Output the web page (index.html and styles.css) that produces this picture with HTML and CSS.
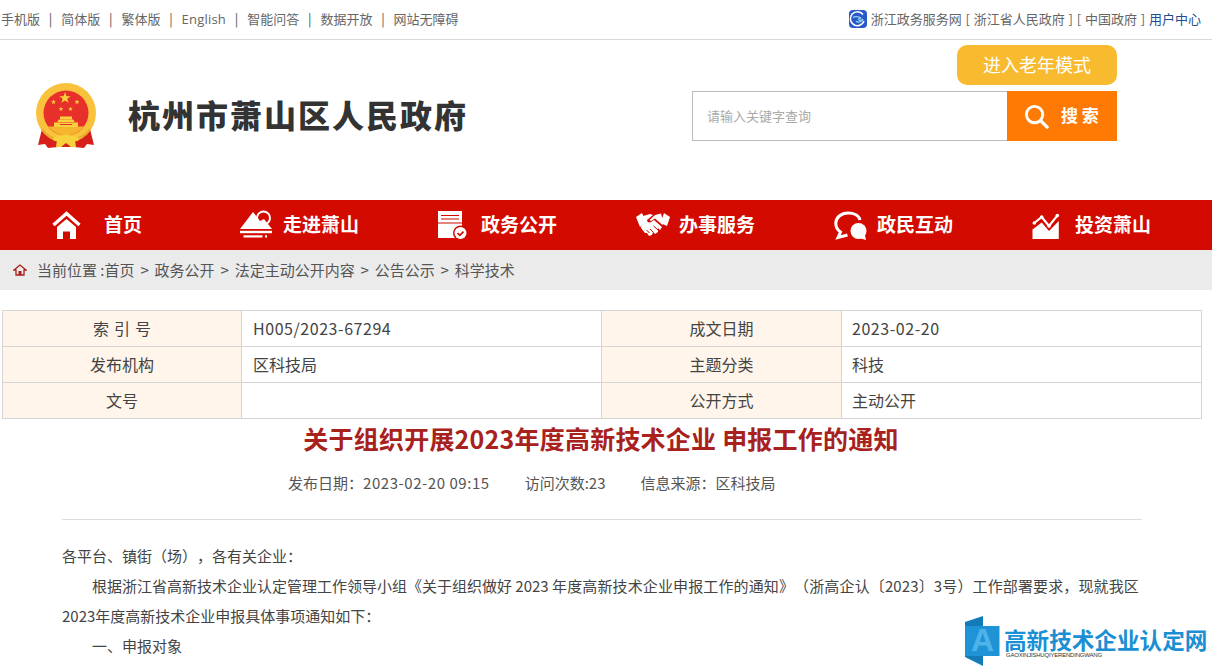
FILE: index.html
```html
<!DOCTYPE html>
<html lang="zh-CN">
<head>
<meta charset="utf-8">
<title>关于组织开展2023年度高新技术企业 申报工作的通知</title>
<link rel="stylesheet" href="styles.css">
</head>
<body>
<div class="top">
  <div class="top-left">
    <a>手机版</a><i>|</i><a>简体版</a><i>|</i><a>繁体版</a><i>|</i><a class="en">English</a><i>|</i><a>智能问答</a><i>|</i><a>数据开放</a><i>|</i><a>网站无障碍</a>
  </div>
  <div class="top-right">
    <svg class="zw" viewBox="0 0 18 18"><rect width="18" height="18" rx="4" fill="#2a58c8"/><path d="M14 4.500A7 7 0 1 0 15 11" fill="none" stroke="#fff" stroke-width="1.600"/><path d="M4 7.500c3-2 6-.5 8 .5-2 0-3 1-2 2 1.500 1 3 0 4-1-1 3-5 4-7 2" fill="none" stroke="#8fd0f5" stroke-width="1.300"/></svg>
    <span>浙江政务服务网 [ 浙江省人民政府 ] [ 中国政府 ] <b class="user">用户中心</b></span>
  </div>
</div>

<header class="header">
  <div class="brand">
    <svg class="emblem" viewBox="0 0 62 68">
      <defs><polygon id="st" points="0,-1 .24,-.31 .95,-.31 .38,.12 .59,.81 0,.4 -.59,.81 -.38,.12 -.95,-.31 -.24,-.31"/></defs>
      <path d="M7 46 3 62l7-1 3 4 10-1h16l10 1 3-4 7 1-4-16Z" fill="#d6201a"/>
      <circle cx="31" cy="30" r="30" fill="#f8c23c"/>
      <circle cx="31" cy="30" r="22.500" fill="#e8302a"/>
      <path d="M13 43.500h36a22.500 22.500 0 0 1-36 0Z" fill="#f6b52e"/>
      <path d="M7 46c5 8 14 11 24 11s19-3 24-11" fill="none" stroke="#e9a92a" stroke-width="1.500"/>
      <g fill="#f9d13c">
        <use href="#st" transform="translate(30 15) scale(6)"/>
        <use href="#st" transform="translate(18.500 19) scale(2.800)"/>
        <use href="#st" transform="translate(42 19) scale(2.800)"/>
        <use href="#st" transform="translate(26 26) scale(2.500)"/>
        <use href="#st" transform="translate(35.500 26) scale(2.500)"/>
        <path d="M24 36.500h14l2 2.500H22Z"/><rect x="25" y="33.500" width="12" height="3"/><rect x="19" y="39.500" width="24" height="4.500"/>
        <path d="M18 55c5-3 9-1 13-4 4 3 8 1 13 4l-1 3-3-1 1 7h-5l-5-4-5 4h-5l1-7-3 1Z"/>
      </g>
      <path d="M25 41.500h12" stroke="#e8302a" stroke-width="1"/>
    </svg>
    <h1 class="site">杭州市萧山区人民政府</h1>
  </div>
  <div class="tools">
    <a class="elder"><span>进入老年模式</span></a>
    <div class="search">
      <div class="field"><span>请输入关键字查询</span></div>
      <div class="go">
        <svg class="mag" viewBox="0 0 26 26"><circle cx="11" cy="11" r="8.500" fill="none" stroke="#fff" stroke-width="3"/><path d="M17.500 17.500 24 24" stroke="#fff" stroke-width="3.500" stroke-linecap="round"/></svg>
        <span>搜 索</span>
      </div>
    </div>
  </div>
</header>

<nav class="nav">
  <a class="item home">
    <svg viewBox="0 0 34 30"><path d="M1.500 15 14.500 3.500 27.500 15" fill="none" stroke="#fff" stroke-width="3.400"/><path d="M5 17 14.500 9 24 17V29H18V21.500H11V29H5Z" fill="#fff"/></svg>
    <span>首页</span>
  </a>
  <a class="item">
    <svg viewBox="0 0 34 30"><circle cx="23.500" cy="8" r="6.500" fill="#d20a00" stroke="#fff" stroke-width="2"/><path d="M0 19 13 2 20 11 24 9 32 19Z" fill="#fff"/><rect y="20.800" width="32" height="2.400" fill="#fff"/><rect x="3.500" y="25.300" width="19" height="2.200" fill="#fff"/><rect x="25" y="25.300" width="2" height="2.200" fill="#fff"/></svg>
    <span>走进萧山</span>
  </a>
  <a class="item">
    <svg viewBox="0 0 34 30"><rect y="1" width="24" height="27" fill="#fff"/><path d="M3 5.500h18M3 9h18M0 13h24" stroke="#d20a00" stroke-width="1.200" fill="none"/><circle cx="22.500" cy="23" r="7.500" fill="#d20a00"/><circle cx="22.500" cy="23" r="6" fill="#fff"/><path d="m19.500 23 2.300 2.300 3.700-3.700" fill="none" stroke="#d20a00" stroke-width="1.700"/></svg>
    <span>政务公开</span>
  </a>
  <a class="item">
    <svg viewBox="0 0 34 30"><path d="M0 7 6 3 10.500 13 4 17Z" fill="#fff"/><path d="M34 7 28 3 24.500 13 31 16Z" fill="#fff"/><path d="M7 6 14 4 17 5 11 10C11 12 13 13 15 12L18 10 26 17 24 20 22 18 22 22 19 24 17 22 16 25 13 26 11 23 9 23 5 18Z" fill="#fff"/><path d="M19 5 25 3.500 27.500 13 26.500 15 19 8.500 15 11 13.500 10Z" fill="#fff"/><path d="m17.500 16 4.500 4M14 19l3.500 3.500M10.500 20l3 3" stroke="#d20a00" fill="none"/></svg>
    <span>办事服务</span>
  </a>
  <a class="item">
    <svg viewBox="0 0 34 30"><path d="M26 10C25 5.500 20 3 14 3 7 3 1.800 7.500 1.800 13.500 1.800 17 3.500 20 6.500 22L4 27.500 13.500 25" fill="none" stroke="#fff" stroke-width="3"/><circle cx="24.500" cy="21" r="8" fill="#fff"/><path d="M25 28 32 30 30.500 23Z" fill="#fff"/></svg>
    <span>政民互动</span>
  </a>
  <a class="item">
    <svg viewBox="0 0 34 30"><path d="M2.300 13 9.700 7 17 16 25.300 5.600" fill="none" stroke="#fff" stroke-width="2.200"/><circle cx="2.300" cy="13" r="1.800" fill="#fff"/><circle cx="9.700" cy="7" r="1.800" fill="#fff"/><circle cx="17" cy="16" r="1.800" fill="#fff"/><circle cx="25.300" cy="5.600" r="1.800" fill="#fff"/><path d="M.5 29V19.500L9.700 12.500 17 21 26.800 11V29Z" fill="#fff"/></svg>
    <span>投资萧山</span>
  </a>
</nav>

<div class="crumb">
  <svg viewBox="0 0 14 12"><path d="M7 1 1 6h2v5h8V6h2Z" fill="none" stroke="#a8211c" stroke-width="1.300"/><rect x="5.500" y="7" width="3" height="4" fill="#a8211c"/></svg>
  <span>当前位置 :首页<i class="sep"> &gt; </i>政务公开<i class="sep"> &gt; </i>法定主动公开内容<i class="sep"> &gt; </i>公告公示<i class="sep"> &gt; </i>科学技术</span>
</div>

<table class="info">
  <colgroup><col class="c1"><col class="c2"><col class="c3"><col class="c4"></colgroup>
  <tr><th><span>索 引 号</span></th><td><span class="num">H005/2023-67294</span></td><th><span>成文日期</span></th><td><span class="num">2023-02-20</span></td></tr>
  <tr><th><span>发布机构</span></th><td><span>区科技局</span></td><th><span>主题分类</span></th><td><span>科技</span></td></tr>
  <tr><th><span>文号</span></th><td></td><th><span>公开方式</span></th><td><span>主动公开</span></td></tr>
</table>

<h2 class="title">关于组织开展2023年度高新技术企业 申报工作的通知</h2>
<div class="meta"><span>发布日期：<b class="num">2023-02-20 09:15</b></span><span>访问次数:23</span><span>信息来源：区科技局</span></div>

<article class="body">
  <p>各平台、镇街（场），各有关企业：</p>
  <p class="ind">根据浙江省高新技术企业认定管理工作领导小组《关于组织做好 2023 <span class="wide">年度高新技术企业申报工作的通知》（浙高企认〔2023〕3号）工作部署要求，现就我区</span>2023年度高新技术企业申报具体事项通知如下：</p>
  <p class="ind">一、申报对象</p>
</article>

<div class="mark">
  <svg viewBox="0 0 35 50"><path d="M0 6 18 0V50L0 41Z" fill="#137bb8"/><rect y="10" width="34.500" height="30" fill="#1e94d6"/><text x="17.500" y="35" class="mark-a">A</text></svg>
  <div class="mark-text">
    <div class="mark-cn">高新技术企业认定网</div>
    <div class="mark-en">GAOXINJISHUQIYERENDINGWANG</div>
  </div>
</div>
</body>
</html>
```

FILE: styles.css
```css
* { box-sizing: border-box; }
html, body { margin: 0; padding: 0; height: 666px; overflow: hidden; background: #fff; }
body { font-family: "Noto Sans CJK SC", "Liberation Sans", sans-serif; color: #444; position: relative; text-spacing-trim: space-all; }
h1, h2, p { margin: 0; font-weight: normal; }

.top { height: 40px; border-bottom: 1px solid #d9d9d9; display: flex; justify-content: space-between; align-items: center; padding: 0 11px 2px 1px; font-size: 13px; color: #666; }
.top-left { display: flex; align-items: center; }
.top-left i { font-style: normal; width: 21.2px; text-align: center; color: #555; }
.top-left .en { font-family: "Open Sans", sans-serif; letter-spacing: .2px; }
.top-right { display: flex; align-items: center; gap: 4px; white-space: pre; word-spacing: .9px; }
.zw { width: 18px; height: 18px; }
.user { font-weight: normal; color: #1e4f8f; }

.header { height: 160px; display: flex; justify-content: space-between; padding-right: 95px; }
.brand { display: flex; align-items: center; padding: 0 0 8px 35px; }
.emblem { width: 62px; height: 68px; margin-top: 2px; }
.site { margin: 0 0 4px 31px; font-size: 32px; font-weight: 900; letter-spacing: 2px; color: #333; white-space: nowrap; }
.tools { display: flex; flex-direction: column; align-items: flex-end; gap: 6px; padding-top: 5px; }
.elder { width: 160px; height: 40px; border-radius: 10px; background: #f8bb2f; color: #fff; font-size: 18px; display: flex; align-items: center; justify-content: center; }
.elder span { margin-bottom: 3px; }
.search { display: flex; width: 425px; height: 50px; }
.field { flex: 1; border: 1px solid #bbb; border-right: 0; padding-left: 14px; font-size: 13px; color: #aaa; display: flex; align-items: center; }
.field span { margin-bottom: 2px; }
.go { width: 110px; background: #ff7a05; color: #fff; display: flex; align-items: center; gap: 12px; padding-left: 17px; font-size: 17px; font-weight: 700; }
.go span { margin-bottom: 3px; }
.mag { width: 25px; height: 25px; }

.nav { height: 50px; background: #d20a00; display: flex; padding-left: 52px; }
.item { width: 198px; flex: none; display: flex; align-items: center; gap: 9px; color: #fff; font-size: 19px; font-weight: 700; }
.item svg { width: 34px; height: 30px; flex: none; }
.item span { margin-bottom: 3px; }
.home { gap: 18px; width: 188px; }

.crumb { height: 40px; background: #ebebeb; display: flex; align-items: center; gap: 10px; padding-left: 13px; font-size: 15px; color: #555; }
.crumb svg { width: 14px; height: 12px; }
.crumb span { margin-bottom: 2px; }
.sep { font-style: normal; margin: 0 2.5px; }

.info { margin: 20px 0 0 2px; width: 1199px; table-layout: fixed; border-collapse: collapse; font-size: 16px; color: #444; }
.c1 { width: 239px; } .c2 { width: 360px; } .c3 { width: 240px; } .c4 { width: 360px; }
.info th, .info td { height: 36px; padding: 0 0 2px; border: 1px solid #d5d5d5; font-weight: normal; }
.info th { background: #fff5ea; text-align: center; word-spacing: 1.500px; }
.info td { padding-left: 11px; }
.info td:last-child { padding-left: 10px; }
.num { font-weight: normal; letter-spacing: .55px; }

.title { margin-top: 1px; height: 36px; line-height: 36px; text-align: center; font-size: 25px; font-weight: 700; letter-spacing: .22px; color: #a8211c; padding-right: 10px; }
.meta { margin-top: 15px; height: 24px; line-height: 24px; display: flex; gap: 35px; padding-left: 288px; font-size: 15px; color: #555; }
.body { margin: 24px 70px 0 62px; padding-top: 21px; border-top: 1px solid #ddd; font-size: 15px; line-height: 30px; color: #444; }
.ind { text-indent: 30px; }
.wide { letter-spacing: .13px; }

.mark { position: absolute; left: 965px; top: 616px; display: flex; gap: 4px; height: 50px; }
.mark svg { width: 35px; height: 50px; }
.mark-a { font: 700 32px "Liberation Sans", sans-serif; fill: #4fb3ea; text-anchor: middle; }
.mark-text { padding-top: 12px; }
.mark-cn { font-size: 22.6px; line-height: 23px; font-weight: 700; color: #1b8fd3; white-space: nowrap; }
.mark-en { font: 6px/7px "Liberation Sans", sans-serif; color: #333; margin: 1px 0 0 2px; letter-spacing: -.2px; }
```
